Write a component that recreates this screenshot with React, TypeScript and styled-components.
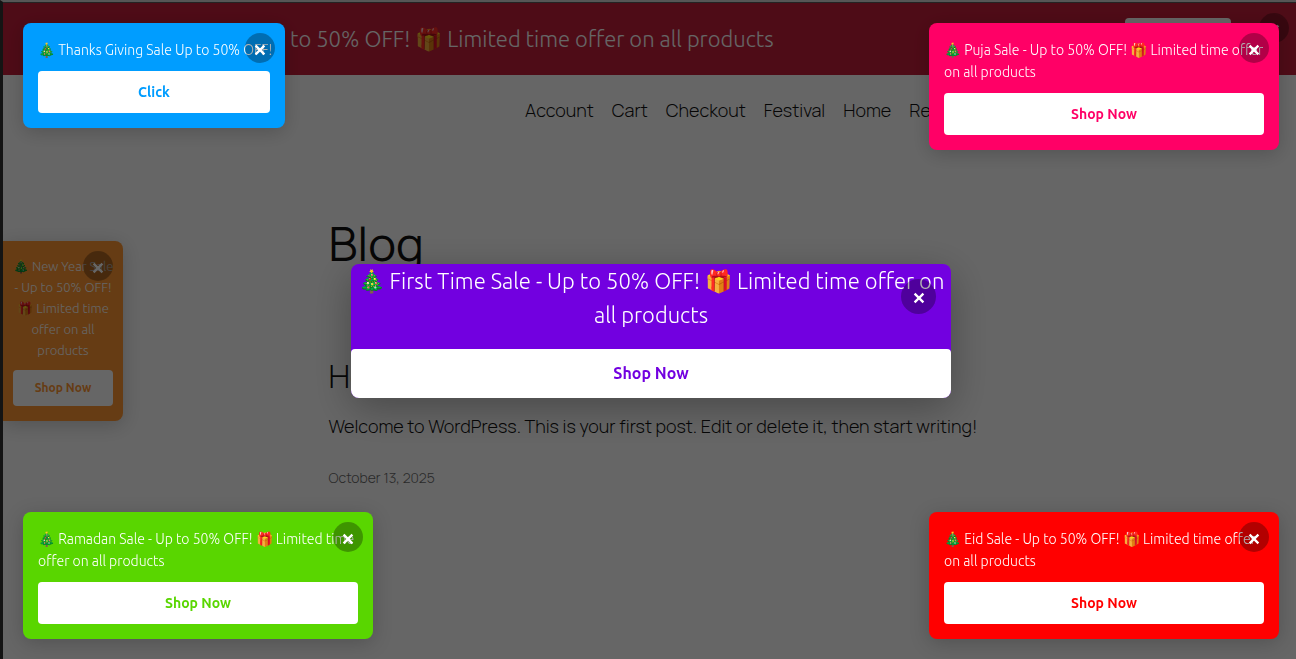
import React from "react";
import styled, { createGlobalStyle, css } from "styled-components";

const GlobalStyle = createGlobalStyle`
  *, *::before, *::after { box-sizing: border-box; }
  body {
    margin: 0;
    background: #fff;
    color: #111;
    font-family: Manrope, Inter, "Liberation Sans", sans-serif;
    font-weight: 300;
    overflow: hidden;
  }
  h1, h2, p { margin: 0; font-weight: 400; }
`;

const promoFont = css`
  font-family: Ubuntu, "Open Sans", "Noto Sans", sans-serif;
  font-weight: 300;
`;

const Frame = styled.div`
  position: relative;
  min-height: 100vh;
  overflow: hidden;
  border-left: 3px solid #141414;
  border-top: 2px solid #565656;
`;

const Page = styled.div`
  margin-right: -3px;
  border-top: 1px solid #242424;
`;

const Banner = styled.section`
  ${promoFont}
  display: flex;
  align-items: center;
  height: 72px;
  background: #c41e3a;
  color: #fff;
  font-size: 22px;
  line-height: 35px;
`;

const BannerText = styled.p`
  flex: 1;
  padding: 0 0 2px 287px;
  font-weight: 300;
  white-space: nowrap;
`;

const BannerButton = styled.button`
  align-self: stretch;
  width: 106px;
  margin: 15px 28px 15px 0;
  border: 0;
  border-radius: 4px;
  background: #fff;
`;

const RoundButton = styled.button<{ $size: number }>`
  display: flex;
  align-items: center;
  justify-content: center;
  width: ${(p) => p.$size}px;
  height: ${(p) => p.$size}px;
  padding: 3px 0 0;
  border: 0;
  border-radius: 50%;
  background: rgba(0, 0, 0, 0.3);
  color: #fff;
`;

const BannerClose = styled(RoundButton)`
  align-self: flex-start;
  margin: 10px 10px 0 0;
`;

const CornerClose = styled(RoundButton)<{ $inset: number }>`
  position: absolute;
  top: ${(p) => p.$inset}px;
  right: ${(p) => p.$inset}px;
`;

const Nav = styled.nav`
  display: flex;
  gap: 18px;
  padding: 23px 0 0 522px;
  font-size: 18px;
  line-height: 25px;
`;

const NavLink = styled.a`
  color: inherit;
  text-decoration: none;
`;

const Content = styled.main`
  max-width: 645px;
  margin: 0 auto;
  padding-top: 93px;
`;

const PageTitle = styled.h1`
  font-size: 47px;
  line-height: 54px;
`;

const PostTitle = styled.h2`
  margin-top: 88px;
  font-size: 32px;
  line-height: 36px;
  font-weight: 300;
`;

const PostText = styled.p`
  margin-top: 20px;
  font-size: 18px;
  line-height: 25px;
  font-weight: 300;
  white-space: nowrap;
`;

const PostDate = styled.time`
  display: block;
  margin-top: 28px;
  color: #686868;
  font-size: 14px;
  line-height: 22px;
`;

const promoButton = css`
  ${promoFont}
  display: block;
  width: 100%;
  border: 0;
  border-radius: 4px;
  background: #fff;
  font-weight: 700;
`;

const SideTab = styled.aside`
  ${promoFont}
  position: absolute;
  left: 0;
  top: 239px;
  width: 120px;
  padding: 15px 10px;
  border-radius: 0 8px 8px 0;
  background: #ff9632;
  color: #fff;
  font-size: 13px;
  line-height: 21px;
  text-align: center;
  white-space: pre;
  box-shadow: 0 4px 20px rgba(0, 0, 0, 0.2);
`;

const SideTabButton = styled.button`
  ${promoButton}
  height: 36px;
  margin-top: 9px;
  padding: 0 0 1px;
  color: #ff9632;
  font-size: 12px;
`;

const Overlay = styled.div`
  position: fixed;
  inset: 3px -3px 0 3px;
  display: flex;
  align-items: center;
  justify-content: center;
  background: rgba(0, 0, 0, 0.6);
`;

const ModalShadow = styled.div`
  border-radius: 8px;
  box-shadow: 0 10px 40px rgba(0, 0, 0, 0.3);
`;

const Modal = styled.section`
  ${promoFont}
  position: relative;
  width: 600px;
  border-radius: 8px;
  overflow: hidden;
  background: #7200e0;
  color: #fff;
  font-size: 22px;
  line-height: 34px;
  text-align: center;
  white-space: pre;
`;

const ModalButton = styled.button`
  ${promoButton}
  height: 49px;
  margin-top: 17px;
  padding: 0 0 2px;
  color: #7200e0;
  font-size: 16px;
`;

type Corner = "top-left" | "top-right" | "bottom-left" | "bottom-right";

const Card = styled.aside<{ $corner: Corner; $color: string; $width: number }>`
  ${promoFont}
  position: fixed;
  ${(p) => (p.$corner.startsWith("top") ? "top: 23px;" : "bottom: 20px;")}
  ${(p) => (p.$corner.endsWith("left") ? "left: 23px;" : "right: 17px;")}
  width: ${(p) => p.$width}px;
  padding: 16px 15px 15px;
  border-radius: 8px;
  background: ${(p) => p.$color};
  color: #fff;
  font-size: 14px;
  line-height: 22px;
  white-space: pre;
  box-shadow: 0 4px 20px rgba(0, 0, 0, 0.2);
`;

const CardButton = styled.button<{ $color: string }>`
  ${promoButton}
  height: 42px;
  margin-top: 10px;
  padding: 0;
  color: ${(p) => p.$color};
  font-size: 14px;
`;

const Message = styled.p`
  font-weight: 300;
`;

const CloseIcon = () => (
  <svg width="12" height="12" viewBox="0 0 12 12" aria-hidden="true">
    <path d="M1.6 1.6 10.4 10.4M10.4 1.6 1.6 10.4" stroke="currentColor" strokeWidth="2.3" fill="none" />
  </svg>
);

const links = ["Account", "Cart", "Checkout", "Festival", "Home", "Refund"];

const cards: { corner: Corner; color: string; width: number; text: string; action: string }[] = [
  { corner: "top-left", color: "#009dff", width: 262, text: "🎄 Thanks Giving Sale Up to 50% OFF!", action: "Click" },
  { corner: "top-right", color: "#ff0066", width: 350, text: "🎄 Puja Sale - Up to 50% OFF! 🎁 Limited time offer\non all products", action: "Shop Now" },
  { corner: "bottom-left", color: "#59d600", width: 350, text: "🎄 Ramadan Sale - Up to 50% OFF! 🎁 Limited time\noffer on all products", action: "Shop Now" },
  { corner: "bottom-right", color: "#ff0000", width: 350, text: "🎄 Eid Sale - Up to 50% OFF! 🎁 Limited time offer\non all products", action: "Shop Now" },
];

export default function App() {
  return (
    <Frame>
      <GlobalStyle />
      <Page>
        <Banner>
          <BannerText>to 50% OFF! 🎁 Limited time offer on all products</BannerText>
          <BannerButton aria-label="Shop now" />
          <BannerClose $size={30} aria-label="Close banner">
            <CloseIcon />
          </BannerClose>
        </Banner>
        <Nav>
          {links.map((label) => (
            <NavLink key={label} href="#">{label}</NavLink>
          ))}
        </Nav>
        <Content>
          <PageTitle>Blog</PageTitle>
          <PostTitle>Hello world!</PostTitle>
          <PostText>Welcome to WordPress. This is your first post. Edit or delete it, then start writing!</PostText>
          <PostDate dateTime="2025-10-13">October 13, 2025</PostDate>
        </Content>
      </Page>
      <SideTab>
        <Message>{"🎄 New Year Sale\n- Up to 50% OFF!\n🎁 Limited time\noffer on all\nproducts"}</Message>
        <SideTabButton>Shop Now</SideTabButton>
        <CornerClose $size={30} $inset={10} aria-label="Close">
          <CloseIcon />
        </CornerClose>
      </SideTab>
      <Overlay>
        <ModalShadow>
          <Modal role="dialog" aria-label="First Time Sale">
            <Message>{"🎄 First Time Sale - Up to 50% OFF! 🎁 Limited time offer on\nall products"}</Message>
            <ModalButton>Shop Now</ModalButton>
            <CornerClose $size={35} $inset={15} aria-label="Close">
              <CloseIcon />
            </CornerClose>
          </Modal>
        </ModalShadow>
      </Overlay>
      {cards.map((card) => (
        <Card key={card.corner} $corner={card.corner} $color={card.color} $width={card.width}>
          <Message>{card.text}</Message>
          <CardButton $color={card.color}>{card.action}</CardButton>
          <CornerClose $size={30} $inset={10} aria-label="Close">
            <CloseIcon />
          </CornerClose>
        </Card>
      ))}
    </Frame>
  );
}
